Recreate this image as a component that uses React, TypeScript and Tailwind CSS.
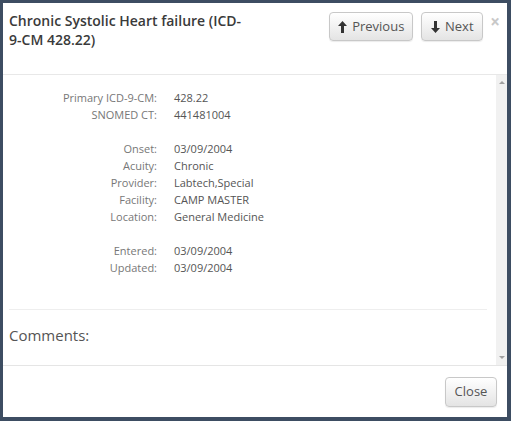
const rows: ([string, string] | null)[] = [
  ["Primary ICD-9-CM:", "428.22"],
  ["SNOMED CT:", "441481004"],
  null,
  ["Onset:", "03/09/2004"],
  ["Acuity:", "Chronic"],
  ["Provider:", "Labtech,Special"],
  ["Facility:", "CAMP MASTER"],
  ["Location:", "General Medicine"],
  null,
  ["Entered:", "03/09/2004"],
  ["Updated:", "03/09/2004"],
];

const btn =
  "flex items-center gap-[5px] rounded-[4px] border border-[#c8c8c8] bg-gradient-to-b from-white to-[#e4e4e4] text-[13px] text-[#555] shadow-[0_1px_1px_rgba(0,0,0,0.08)]";

const ArrowUp = () => (
  <svg width="9" height="12" viewBox="0 0 9 12">
    <path d="M4.5 0 L9 5 H6 V12 H3 V5 H0 Z" fill="#333" />
  </svg>
);

const ArrowDown = () => (
  <svg width="9" height="12" viewBox="0 0 9 12">
    <path d="M4.5 12 L9 7 H6 V0 H3 V7 H0 Z" fill="#333" />
  </svg>
);

export default function App() {
  return (
    <div
      className="w-[511px] h-[421px] bg-[#3d4d62] pt-[3px] pl-[3px] pr-[4px] pb-[4px]"
      style={{ fontFamily: '"Open Sans", "Liberation Sans", sans-serif' }}
    >
      <div className="flex h-full flex-col bg-white">
        {/* header */}
        <div className="flex h-[72px] shrink-0 border-b border-[#e8e8e8] pl-[6px] pt-[8px]">
          <h4 className="w-[238px] text-[14px] font-semibold leading-[19px] text-[#3a3a3a]">
            Chronic Systolic Heart failure (ICD-9-CM 428.22)
          </h4>
          <div className="ml-auto flex items-start gap-[8px] pt-[1px]">
            <button className={`${btn} h-[29px] w-[84px] justify-center`}>
              <ArrowUp />
              <span>Previous</span>
            </button>
            <button className={`${btn} h-[29px] w-[62px] justify-center`}>
              <ArrowDown />
              <span>Next</span>
            </button>
            <span className="-ml-[1px] mr-[7px] mt-[1px] text-[17px] font-bold leading-[18px] text-[#c8c8c8]">
              ×
            </span>
          </div>
        </div>

        {/* body */}
        <div className="flex min-h-0 flex-1">
          <div className="flex-1 pl-[6px] pr-[9px] pt-[14px]">
            <div className="grid grid-cols-[148px_1fr] gap-x-[17px] text-[11px] leading-[17px]">
              {rows.map((r, i) =>
                r ? (
                  <div key={i} className="contents">
                    <div className="text-right text-[#777]">{r[0]}</div>
                    <div className="text-[#555]">{r[1]}</div>
                  </div>
                ) : (
                  <div key={i} className="col-span-2 h-[17px]" />
                )
              )}
            </div>
            <div className="mt-[33px] border-t border-[#eee]" />
            <div className="mt-[14px] text-[15px] leading-[22px] text-[#555]">Comments:</div>
          </div>
          <div className="flex w-[11px] shrink-0 flex-col items-center justify-between bg-[#f1f1f1] py-[6px]">
            <div className="h-0 w-0 border-x-[3px] border-b-[3px] border-x-transparent border-b-[#a0a0a0]" />
            <div className="h-0 w-0 border-x-[3px] border-t-[3px] border-x-transparent border-t-[#a0a0a0]" />
          </div>
        </div>

        {/* footer */}
        <div className="flex h-[52px] shrink-0 items-start justify-end border-t border-[#e5e5e5] pr-[10px] pt-[11px]">
          <button className={`${btn} h-[30px] w-[52px] justify-center`}>Close</button>
        </div>
      </div>
    </div>
  );
}
